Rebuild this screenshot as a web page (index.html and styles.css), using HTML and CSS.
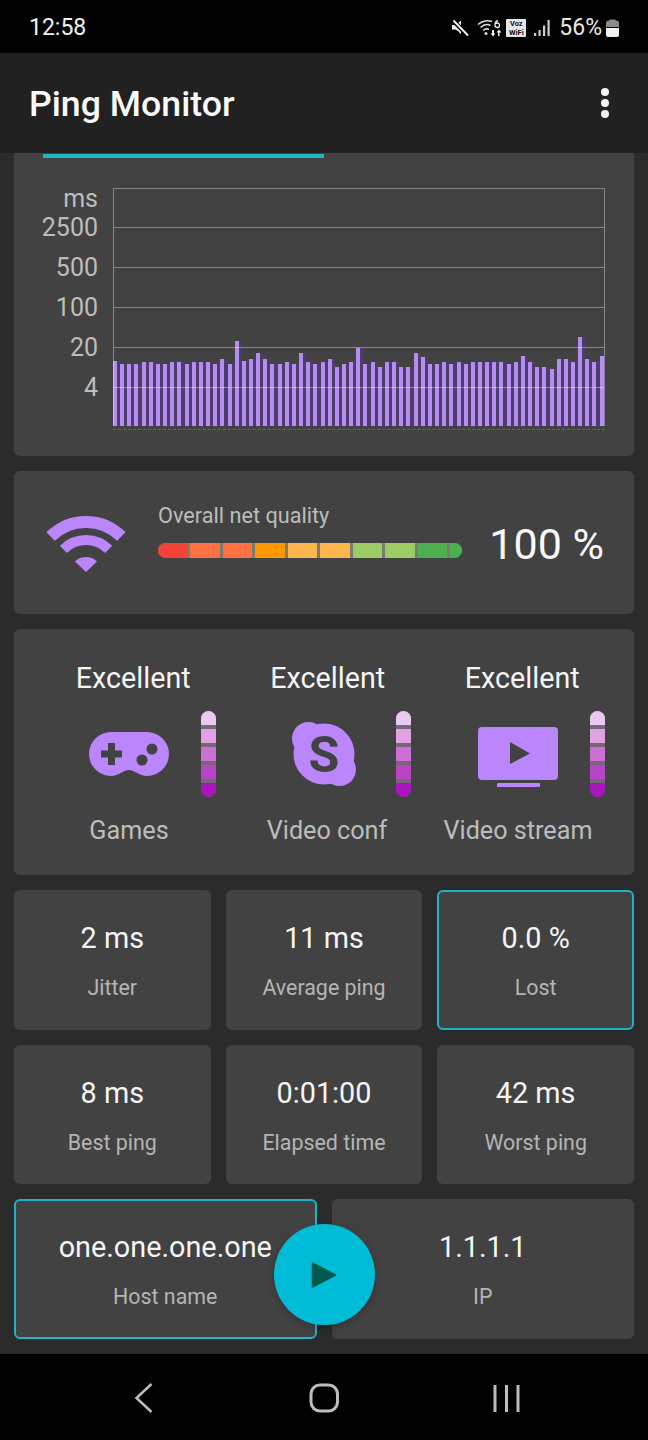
FILE: index.html
```html
<!DOCTYPE html>
<html lang="en">
<head>
<meta charset="utf-8">
<title>Ping Monitor</title>
<link rel="stylesheet" href="styles.css">
</head>
<body>
<div class="phone">
  <header class="status">
    <span class="time">12:58</span>
    <div class="status-icons">
      <svg class="i-mute" width="18" height="18" viewBox="0 0 18 18"><path d="M1 6h3.500L10 1.500V14L4.500 10.500H1z" fill="#eee"/><path d="M10 3v12l-2-1.500z" fill="#eee"/><path d="M2 1.500 17 16.500" stroke="#000" stroke-width="4.500"/><path d="M2.500 1.500 17 16.500" stroke="#eee" stroke-width="2"/></svg>
      <svg class="i-wifi" width="26" height="18" viewBox="0 0 26 18"><g fill="none" stroke="#ddd" stroke-width="1.500"><path d="M1 5.500C5 1.800 11 1 15 2.500"/><path d="M3.500 8.500C6.500 5.500 10.500 5 13.500 6.500"/><path d="M6 11.500C8 9.800 10 9.500 12 10.300"/></g><circle cx="9" cy="14.500" r="1.500" fill="#ddd"/><path d="M15 11h2v3.500h1.500L16 17.500l-2.500-3H15zM22.500 17h-1.500v-3.500h-1.500L22 10.500l2.500 3h-2z" fill="#eee"/><path d="M21 1.500c-2 .5-3 2-3 4.500 0 1.500.8 2.500 2.200 2.500s2.300-1 2.300-2.300-.9-2.200-2.100-2.200c-.9 0-1.600.4-2 1" fill="none" stroke="#eee" stroke-width="1.300"/></svg>
      <div class="vo"><span>Voz</span><span>WiFi</span></div>
      <svg class="i-signal" width="16" height="18" viewBox="0 0 16 18"><g fill="#ccc"><rect x="0" y="14" width="2.200" height="3"/><rect x="4.500" y="11" width="2.200" height="6"/><rect x="9" y="6.500" width="2.200" height="10.500"/><rect x="13.500" y="1" width="2.200" height="16"/></g></svg>
      <span class="pct">56%</span>
      <svg class="i-batt" width="13" height="18" viewBox="0 0 13 18"><path d="M3 1.500 4 .500h5l1 1 2 .5q1 .5 1 1.500V8H0V3.500q0-1 1-1.500z" fill="#8a8a8a"/><path d="M0 9h13v7q0 2-2 2H2q-2 0-2-2z" fill="#f2f2f2"/></svg>
    </div>
  </header>

  <div class="appbar">
    <h1 class="title">Ping Monitor</h1>
    <div class="more"><i></i><i></i><i></i></div>
  </div>

  <main class="content">
    <section class="card chart-card">
      <div class="tab-line"></div>
      <div class="chart">
        <div class="axis">
          <span class="axis-unit">ms</span>
          <span>2500</span><span>500</span><span>100</span><span>20</span><span>4</span>
        </div>
        <div class="plot">
          <div class="bars">
            <i style="height:65px"></i><i style="height:62px"></i><i style="height:62px"></i><i style="height:62px"></i><i style="height:64px"></i><i style="height:64px"></i><i style="height:62px"></i><i style="height:62px"></i><i style="height:64px"></i><i style="height:64px"></i>
            <i style="height:62px"></i><i style="height:64px"></i><i style="height:64px"></i><i style="height:64px"></i><i style="height:62px"></i><i style="height:67px"></i><i style="height:62px"></i><i style="height:85px"></i><i style="height:65px"></i><i style="height:67px"></i>
            <i style="height:73px"></i><i style="height:67px"></i><i style="height:62px"></i><i style="height:62px"></i><i style="height:64px"></i><i style="height:62px"></i><i style="height:73px"></i><i style="height:64px"></i><i style="height:62px"></i><i style="height:64px"></i>
            <i style="height:67px"></i><i style="height:59px"></i><i style="height:62px"></i><i style="height:64px"></i><i style="height:78px"></i><i style="height:62px"></i><i style="height:64px"></i><i style="height:59px"></i><i style="height:64px"></i><i style="height:64px"></i>
            <i style="height:59px"></i><i style="height:59px"></i><i style="height:73px"></i><i style="height:69px"></i><i style="height:62px"></i><i style="height:62px"></i><i style="height:64px"></i><i style="height:62px"></i><i style="height:64px"></i><i style="height:62px"></i>
            <i style="height:64px"></i><i style="height:64px"></i><i style="height:64px"></i><i style="height:64px"></i><i style="height:64px"></i><i style="height:62px"></i><i style="height:64px"></i><i style="height:70px"></i><i style="height:64px"></i><i style="height:59px"></i>
            <i style="height:59px"></i><i style="height:57px"></i><i style="height:67px"></i><i style="height:67px"></i><i style="height:64px"></i><i style="height:89px"></i><i style="height:67px"></i><i style="height:64px"></i><i style="height:70px"></i>
          </div>
          <div class="grid-rows"><div class="grid-first"></div><div></div><div></div><div></div><div></div><div></div></div>
        </div>
      </div>
      <div class="ticks"></div>
    </section>

    <section class="card quality">
      <svg class="wifi-big" width="80" height="58" viewBox="0 0 80 58">
        <g fill="none" stroke="#bb86fc">
          <path d="M4.600 21.600A50 50 0 0 1 75.400 21.600" stroke-width="12"/>
          <path d="M17.400 34.400A32 32 0 0 1 62.600 34.400" stroke-width="10"/>
        </g>
        <path d="M40 57 29 46.500A16 16 0 0 1 51 46.500Z" fill="#bb86fc"/>
      </svg>
      <div class="quality-mid">
        <div class="quality-label">Overall net quality</div>
        <div class="scale">
          <i class="s1"></i><i class="s2"></i><i class="s2"></i><i class="s3"></i><i class="s4"></i><i class="s4"></i><i class="s5"></i><i class="s5"></i><i class="s6"></i><i class="s6 end"></i>
        </div>
      </div>
      <div class="quality-val">100 %</div>
    </section>

    <section class="card uses">
      <div class="use">
        <div class="use-head">Excellent</div>
        <div class="use-row">
          <div class="use-icon">
            <svg width="80" height="44" viewBox="0 0 80 44"><path fill="#bb86fc" fill-rule="evenodd" d="M22 0H58A22 22 0 0 1 58 44C50 44 46 38 40 38 34 38 30 44 22 44A22 22 0 0 1 22 0ZM19 11V18.500H12V25.500H19V33H26V25.500H33V18.500H26V11ZM63 11.500A5.500 5.500 0 1 0 63 22.500 5.500 5.500 0 1 0 63 11.500ZM53 22.500A5.500 5.500 0 1 0 53 33.500 5.500 5.500 0 1 0 53 22.500Z"/></svg>
          </div>
          <div class="meter"><i class="m1"></i><i class="m2"></i><i class="m3"></i><i class="m4"></i><i class="m5"></i></div>
        </div>
        <div class="use-label">Games</div>
      </div>
      <div class="use">
        <div class="use-head">Excellent</div>
        <div class="use-row">
          <div class="use-icon">
            <svg width="66" height="66" viewBox="0 0 66 66"><g fill="#bb86fc"><circle cx="33" cy="33" r="30.500"/><circle cx="17.500" cy="17.500" r="16.500"/><circle cx="48.500" cy="48.500" r="16.500"/></g><text class="skype-s" x="33" y="51" text-anchor="middle">S</text></svg>
          </div>
          <div class="meter"><i class="m1"></i><i class="m2"></i><i class="m3"></i><i class="m4"></i><i class="m5"></i></div>
        </div>
        <div class="use-label use-label-mid">Video conf</div>
      </div>
      <div class="use">
        <div class="use-head">Excellent</div>
        <div class="use-row">
          <div class="use-icon tv-icon">
            <svg width="80" height="60" viewBox="0 0 80 60"><rect width="80" height="53" rx="4" fill="#bb86fc"/><rect x="19" y="56" width="43" height="4" rx="1" fill="#bb86fc"/><path d="M32 15 52 26.500 32 37Z" fill="#424242"/></svg>
          </div>
          <div class="meter"><i class="m1"></i><i class="m2"></i><i class="m3"></i><i class="m4"></i><i class="m5"></i></div>
        </div>
        <div class="use-label">Video stream</div>
      </div>
    </section>

    <section class="stats">
      <div class="stat"><div class="stat-val">2 ms</div><div class="stat-label">Jitter</div></div>
      <div class="stat"><div class="stat-val">11 ms</div><div class="stat-label">Average ping</div></div>
      <div class="stat stat-on"><div class="stat-val">0.0 %</div><div class="stat-label">Lost</div></div>
      <div class="stat"><div class="stat-val">8 ms</div><div class="stat-label">Best ping</div></div>
      <div class="stat"><div class="stat-val">0:01:00</div><div class="stat-label">Elapsed time</div></div>
      <div class="stat"><div class="stat-val">42 ms</div><div class="stat-label">Worst ping</div></div>
    </section>

    <section class="hosts">
      <div class="stat stat-on"><div class="stat-val">one.one.one.one</div><div class="stat-label">Host name</div></div>
      <div class="stat"><div class="stat-val">1.1.1.1</div><div class="stat-label">IP</div></div>
      <button class="fab" type="button" aria-label="Start">
        <svg width="26" height="28" viewBox="0 0 26 28"><path d="M1.500 2 24.500 14 1.500 26Z" fill="#005a4e" stroke="#005a4e" stroke-width="1.500" stroke-linejoin="round"/></svg>
      </button>
    </section>
  </main>

  <nav class="navbar">
    <svg width="20" height="32" viewBox="0 0 20 32"><path d="M17.500 2 2.500 16 17.500 30" fill="none" stroke="#bdbdbd" stroke-width="2.600"/></svg>
    <svg width="32" height="32" viewBox="0 0 32 32"><rect x="4" y="3" width="26.500" height="26" rx="9" fill="none" stroke="#bdbdbd" stroke-width="3"/></svg>
    <svg width="28" height="32" viewBox="0 0 28 32"><g stroke="#bdbdbd" stroke-width="3"><path d="M3 3V30"/><path d="M14.500 3V30"/><path d="M26 3V30"/></g></svg>
  </nav>
</div>
</body>
</html>
```

FILE: styles.css
```css
* { box-sizing: border-box; }
html, body { margin: 0; padding: 0; background: #000; }
body { font-family: Roboto, "Liberation Sans", sans-serif; color: #f2f2f2; }
.phone { width: 648px; height: 1440px; display: flex; flex-direction: column; overflow: hidden; }

/* status bar */
.status { height: 53px; flex: none; background: #000; display: flex; align-items: center; justify-content: space-between; padding: 3px 29px 0; }
.time { font-size: 23px; line-height: 28px; color: #f2f2f2; }
.status-icons { display: flex; align-items: center; }
.status-icons svg { display: block; }
.i-wifi { margin-left: 8px; }
.vo { margin-left: 3px; width: 20px; height: 18px; background: #e6e6e6; color: #111; border-radius: 1px; display: flex; flex-direction: column; align-items: center; font-size: 7.500px; font-weight: 700; line-height: 9px; overflow: hidden; }
.i-signal { margin-left: 8px; }
.pct { margin-left: 9px; font-size: 23px; line-height: 28px; color: #e8e8e8; }
.i-batt { margin-left: 4px; }

/* app bar */
.appbar { height: 100px; flex: none; background: #212121; display: flex; align-items: center; justify-content: space-between; padding: 0 39px 0 29px; }
.title { margin: 2px 0 0; font-size: 35.700px; line-height: 42px; font-weight: 500; color: #fafafa; }
.more { display: flex; flex-direction: column; gap: 3px; }
.more i { display: block; width: 8px; height: 8px; border-radius: 50%; background: #f5f5f5; }

/* content */
.content { height: 1201px; flex: none; background: #2b2b2b; padding: 0 14px; display: flex; flex-direction: column; gap: 15px; }
.card { background: #424242; border-radius: 6px; flex: none; }

/* chart */
.chart-card { height: 303px; border-radius: 0 0 6px 6px; padding-top: 1px; }
.tab-line { width: 281px; height: 4px; margin-left: 29px; background: #1fb3c6; }
.chart { margin-top: 30px; height: 238px; display: flex; }
.axis { width: 84px; display: flex; flex-direction: column; align-items: flex-end; font-size: 25px; line-height: 42px; color: #bdbdbd; }
.axis span { display: block; height: 40px; flex: none; }
.axis .axis-unit { height: 19px; line-height: 21px; }
.plot { position: relative; width: 492px; margin-left: 15px; height: 238px; overflow: hidden; }
.bars { position: absolute; left: 0; bottom: 0; display: flex; align-items: flex-end; height: 100%; }
.bars i { display: block; width: 7.170px; flex: none; background: linear-gradient(90deg, #b58df0 0, #b58df0 4.200px, #4e3c6c 4.200px, #4e3c6c 100%); }
.grid-rows { position: absolute; inset: 0; display: flex; flex-direction: column; border: solid rgba(255, 255, 255, .36); border-width: 0 1px; }
.grid-rows div { height: 40px; flex: none; border-top: 1px solid rgba(255, 255, 255, .36); }
.grid-rows .grid-first { height: 38.500px; }
.ticks { margin: 3px 29px 0 99px; border-top: 1px dashed #666; }

/* quality */
.quality { height: 143px; display: flex; align-items: flex-start; padding: 32px 30px 0 32px; }
.wifi-big { flex: none; margin-top: 12px; }
.quality-mid { width: 304px; margin-left: 32px; flex: none; }
.quality-label { font-size: 21.700px; line-height: 26px; color: #bdbdbd; }
.scale { margin-top: 14px; height: 15px; display: flex; gap: 3px; background: #7d7a70; border-radius: 8px; overflow: hidden; }
.scale i { display: block; flex: 1; }
.scale .end { flex: none; width: 12px; }
.s1 { background: #f44336; }
.s2 { background: #ff7043; }
.s3 { background: #ff9800; }
.s4 { background: #ffb74d; }
.s5 { background: #9ccc65; }
.s6 { background: #4caf50; }
.quality-val { margin-left: auto; margin-top: 16px; font-size: 43px; line-height: 50px; color: #fafafa; white-space: nowrap; }

/* use cases */
.uses { height: 246px; padding: 32px 0 0 22px; display: grid; grid-template-columns: repeat(3, 194.500px); align-content: start; }
.use-head { font-size: 28.700px; line-height: 34px; text-align: center; color: #f5f5f5; }
.use-row { margin-top: 16px; height: 86px; display: flex; align-items: center; }
.use-icon { width: 80px; margin-left: 53px; display: flex; justify-content: center; flex: none; }
.use-icon svg { display: block; }
.tv-icon { margin-top: 6px; }
.meter { width: 15px; height: 86px; margin-left: 32px; flex: none; display: flex; flex-direction: column; gap: 3.500px; background: #77677a; border-radius: 8px; overflow: hidden; }
.meter i { display: block; flex: 1; }
.m1 { background: #ebc9f0; }
.m2 { background: #e0a2e2; }
.m3 { background: #cd70d3; }
.m4 { background: #b845c6; }
.m5 { background: #a915bd; }
.use-label { width: 186px; margin-top: 19px; font-size: 25.200px; line-height: 30px; text-align: center; color: #bdbdbd; white-space: nowrap; }
.use-label-mid { margin-left: 3.500px; }
.skype-s { font-family: Roboto, "Liberation Sans", sans-serif; font-size: 50px; font-weight: 700; fill: #424242; }

/* stats */
.stats { display: grid; grid-template-columns: repeat(3, 1fr); gap: 15px; flex: none; }
.hosts { position: relative; display: grid; grid-template-columns: repeat(2, 1fr); gap: 15px; flex: none; }
.stat { height: 139.500px; background: #424242; border-radius: 6px; border: 2px solid transparent; padding-top: 30px; text-align: center; }
.stat-on { border-color: #1fb3c6; }
.stat-val { font-size: 28.800px; line-height: 32px; color: #f5f5f5; white-space: nowrap; }
.stat-label { margin-top: 21px; font-size: 21.400px; line-height: 26px; color: #b5b5b5; white-space: nowrap; }
.fab { position: absolute; left: 259.500px; top: 25px; width: 101px; height: 101px; padding: 0; border: 0; border-radius: 50%; background: #00bcd6; box-shadow: 0 3px 8px rgba(0, 0, 0, .22); display: flex; align-items: center; justify-content: center; }
.fab svg { display: block; }

/* nav bar */
.navbar { height: 86px; flex: none; background: #000; display: flex; align-items: flex-start; justify-content: space-between; padding: 28px 128px 0 134px; }
.navbar svg { display: block; }
```
